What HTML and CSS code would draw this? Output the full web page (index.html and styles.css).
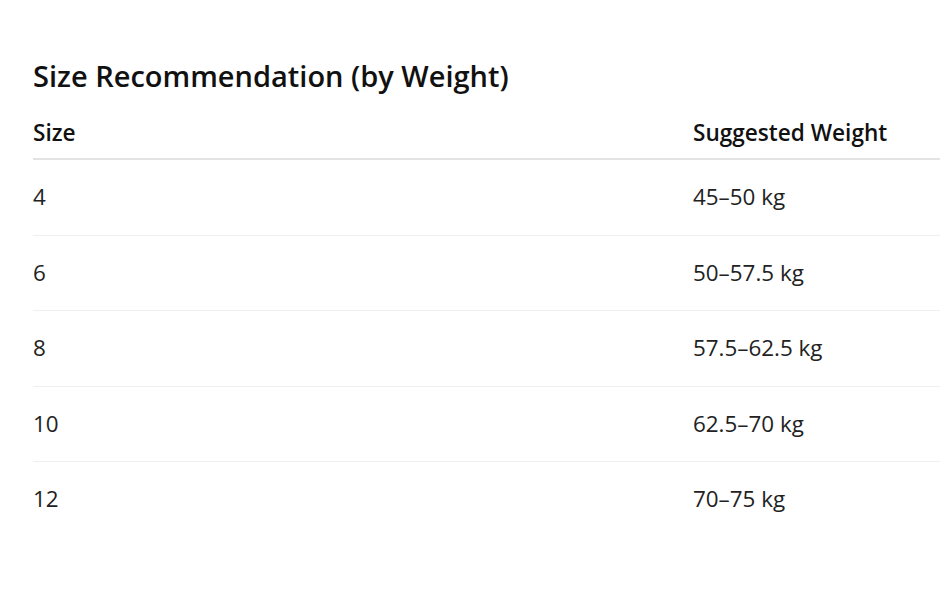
FILE: index.html
```html
<!DOCTYPE html>
<html>
<head>
<meta charset="utf-8">
<link rel="stylesheet" href="styles.css">
</head>
<body>
<main class="page">
  <h2 class="title">Size Recommendation (by Weight)</h2>
  <table class="sizes">
    <thead>
      <tr><th class="col-size">Size</th><th>Suggested Weight</th></tr>
    </thead>
    <tbody>
      <tr><td>4</td><td>45–50 kg</td></tr>
      <tr><td>6</td><td>50–57.5 kg</td></tr>
      <tr><td>8</td><td>57.5–62.5 kg</td></tr>
      <tr><td>10</td><td>62.5–70 kg</td></tr>
      <tr><td>12</td><td>70–75 kg</td></tr>
    </tbody>
  </table>
</main>
</body>
</html>
```
FILE: styles.css
```css
html, body {
  margin: 0;
  padding: 0;
  background: #ffffff;
  overflow: hidden;
}
.page {
  padding: 58px 0 0 33px;
  font-family: "Open Sans", "Noto Sans", sans-serif;
  color: #1f1f1f;
}
.title {
  margin: 0 0 16px 0;
  font-size: 29px;
  font-weight: 600;
  line-height: 36px;
  color: #111111;
}
.sizes {
  border-collapse: collapse;
  width: 907px;
}
.sizes th {
  text-align: left;
  font-size: 22.6px;
  font-weight: 600;
  color: #111111;
  padding: 10px 0 12px 0;
  line-height: 26px;
  border-bottom: 2px solid #e3e3e3;
  white-space: nowrap;
}
.sizes .col-size {
  width: 660px;
}
.sizes td {
  font-size: 22.4px;
  line-height: 26px;
  padding: 0;
  height: 74.5px;
  border-bottom: 1px solid #efefef;
  color: #222222;
  white-space: nowrap;
}
.sizes tbody tr:last-child td {
  border-bottom: none;
}
```
